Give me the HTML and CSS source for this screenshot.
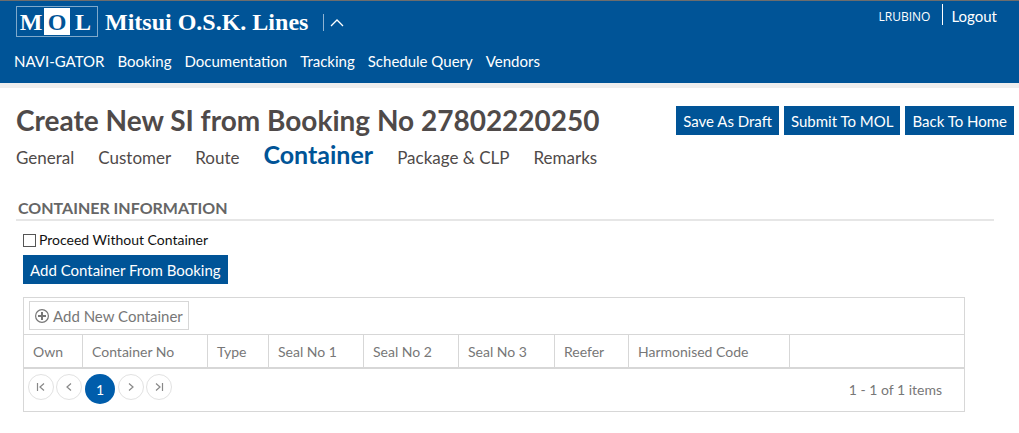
FILE: index.html
```html
<!DOCTYPE html>
<html lang="en">
<head>
<meta charset="utf-8">
<title>Create New SI</title>
<link rel="stylesheet" href="styles.css">
</head>
<body>
<header class="header">
  <div class="topbar">
    <a class="brand" href="#">
      <span class="brand-box"><span class="brand-cell">M</span><span class="brand-cell brand-cell-on">O</span><span class="brand-cell">L</span></span>
      <span class="brand-name">Mitsui O.S.K. Lines</span>
    </a>
    <button class="collapse" type="button" aria-label="Collapse header">
      <svg width="14" height="9" viewBox="0 0 14 9"><path d="M1 8 L7 2 L13 8" fill="none" stroke="currentColor" stroke-width="1.3"/></svg>
    </button>
    <div class="account">
      <span class="user">LRUBINO</span>
      <a class="logout" href="#">Logout</a>
    </div>
  </div>
  <nav class="menu">
    <a href="#">NAVI-GATOR</a>
    <a href="#">Booking</a>
    <a href="#">Documentation</a>
    <a href="#">Tracking</a>
    <a href="#">Schedule Query</a>
    <a href="#">Vendors</a>
  </nav>
</header>
<main class="page">
  <div class="heading">
    <h1 class="title">Create New SI from Booking No 27802220250</h1>
    <div class="actions">
      <button class="btn" type="button">Save As Draft</button>
      <button class="btn" type="button">Submit To MOL</button>
      <button class="btn" type="button">Back To Home</button>
    </div>
  </div>
  <nav class="tabs">
    <a href="#">General</a>
    <a href="#">Customer</a>
    <a href="#">Route</a>
    <a class="tab-current" href="#">Container</a>
    <a href="#">Package &amp; CLP</a>
    <a href="#">Remarks</a>
  </nav>
  <section class="section">
    <h2 class="section-title">CONTAINER INFORMATION</h2>
    <div class="section-body">
      <label class="check"><input type="checkbox">Proceed Without Container</label>
      <button class="btn btn-wide" type="button">Add Container From Booking</button>
      <div class="grid">
        <div class="toolbar">
          <button class="add" type="button">
            <svg width="14" height="14" viewBox="0 0 14 14" fill="none" stroke="currentColor"><circle cx="7" cy="7" r="6.4" stroke-width="1.2"/><path d="M7 3 V11 M3 7 H11" stroke-width="2"/></svg>
            Add New Container
          </button>
        </div>
        <table class="table">
          <colgroup><col class="c-own"><col class="c-no"><col class="c-type"><col class="c-seal"><col class="c-seal"><col class="c-seal-end"><col class="c-reefer"><col class="c-code"><col></colgroup>
          <thead>
            <tr><th>Own</th><th>Container No</th><th>Type</th><th>Seal No 1</th><th>Seal No 2</th><th>Seal No 3</th><th>Reefer</th><th>Harmonised Code</th><td></td></tr>
          </thead>
        </table>
        <div class="pager">
          <button class="page-btn" type="button" aria-label="First page"><svg width="10" height="10" viewBox="0 0 10 10"><path d="M1.5 1 V9 M8 1.5 L4 5 L8 8.5"/></svg></button>
          <button class="page-btn" type="button" aria-label="Previous page"><svg width="10" height="10" viewBox="0 0 10 10"><path d="M7 1.5 L3 5 L7 8.5"/></svg></button>
          <button class="page-btn page-current" type="button">1</button>
          <button class="page-btn" type="button" aria-label="Next page"><svg width="10" height="10" viewBox="0 0 10 10"><path d="M3 1.5 L7 5 L3 8.5"/></svg></button>
          <button class="page-btn" type="button" aria-label="Last page"><svg width="10" height="10" viewBox="0 0 10 10"><path d="M2 1.5 L6 5 L2 8.5 M8.5 1 V9"/></svg></button>
          <span class="count">1 - 1 of 1 items</span>
        </div>
      </div>
    </div>
  </section>
</main>
</body>
</html>
```
FILE: styles.css
```css
* { box-sizing: border-box; }
body {
  margin: 0;
  background: #fff;
  color: #4f4a49;
  font-family: Lato, "Open Sans", sans-serif;
  font-size: 15px;
}
a { color: inherit; text-decoration: none; }
button { font: inherit; cursor: pointer; }
h1, h2 { margin: 0; }

.header {
  background: #005497;
  color: #fff;
  border-top: 1px solid #6d6d6d;
  border-bottom: 5px solid #eee;
  padding-bottom: 12px;
}
.topbar {
  display: flex;
  align-items: flex-start;
  padding: 3px 22px 0 16px;
}
.brand {
  display: flex;
  align-items: center;
  gap: 7px;
  margin-top: 2px;
  font-family: "Liberation Serif", serif;
  font-weight: bold;
  font-size: 24px;
}
.brand-box {
  display: flex;
  height: 31px;
  border: 1px solid #7fa9cb;
  padding: 1px;
}
.brand-cell { width: 26px; text-align: center; line-height: 28px; }
.brand-cell-on { background: #fff; color: #005497; }
.brand-name { line-height: 30px; white-space: nowrap; }
.collapse {
  margin: 10px 0 0 15px;
  height: 17px;
  padding: 0 0 0 6px;
  border: 0;
  border-left: 1px solid #8fb3d2;
  background: none;
  color: #fff;
  display: flex;
  align-items: center;
}
.account { margin-left: auto; display: flex; line-height: 21px; }
.user {
  font-family: "Open Sans", sans-serif;
  font-size: 12px;
  line-height: 25px;
  height: 21px;
  padding-right: 12px;
  border-right: 1px solid #fff;
}
.logout { padding-left: 8px; line-height: 24px; }
.menu {
  display: flex;
  gap: 13px;
  padding: 14px 14px 0;
  line-height: 20px;
}

.page { padding: 18px 5px 0 16px; }
.heading { display: flex; justify-content: space-between; align-items: flex-start; }
.title { font-size: 28px; line-height: 28px; font-weight: bold; white-space: nowrap; }
.actions { display: flex; gap: 5px; }
.btn {
  height: 29px;
  border: 0;
  padding: 0 7px;
  background: #005497;
  color: #fff;
  white-space: nowrap;
}
.tabs {
  display: flex;
  align-items: baseline;
  gap: 24px;
  margin-top: 2px;
  font-size: 17px;
  line-height: 34px;
}
.tab-current { font-size: 25px; font-weight: bold; color: #005497; }

.section { margin: 22px 20px 0 0; }
.section-title {
  border-bottom: 2px solid #e6e6e6;
  padding-left: 2px;
  font-size: 16px;
  line-height: 22px;
  color: #666;
}
.section-body {
  padding: 11px 29px 0 7px;
  display: flex;
  flex-direction: column;
  align-items: flex-start;
}
.check {
  display: flex;
  align-items: center;
  gap: 3px;
  font-size: 14px;
  line-height: 16px;
  color: #111;
}
.check input {
  appearance: none;
  width: 13px;
  height: 13px;
  margin: 0;
  border: 1px solid #555;
  background: #fff;
}
.check input:checked { background: #005497; }
.btn-wide { margin-top: 7px; }

.grid { align-self: stretch; margin-top: 13px; border: 1px solid #d7d7d7; color: #777; }
.toolbar { padding: 3px 5px 4px; }
.add {
  display: flex;
  align-items: center;
  gap: 4px;
  height: 29px;
  padding: 0 5px;
  border: 1px solid #d7d7d7;
  background: #fff;
  color: #777;
}
.table {
  width: 100%;
  table-layout: fixed;
  border-collapse: separate;
  border-spacing: 0;
  border-top: 1px solid #d7d7d7;
  border-bottom: 2px solid #d7d7d7;
  font-size: 14px;
}
.table th {
  height: 32px;
  padding: 0 9px;
  border-right: 1px solid #d7d7d7;
  text-align: left;
  font-weight: normal;
  white-space: nowrap;
}
.c-own { width: 59px; }
.c-no { width: 125px; }
.c-type { width: 61px; }
.c-seal { width: 95px; }
.c-seal-end { width: 96px; }
.c-reefer { width: 74px; }
.c-code { width: 161px; }
.pager { display: flex; align-items: flex-start; gap: 2px; padding: 5px 22px 5px 4px; }
.page-btn {
  width: 26px;
  height: 26px;
  padding: 0;
  border: 1px solid #e2e2e2;
  border-radius: 50%;
  background: #fff;
  display: flex;
  align-items: center;
  justify-content: center;
}
.page-btn svg { fill: none; stroke: #888; stroke-width: 1.2; }
.page-current { width: 30px; height: 30px; margin: 0 1px; border: 0; background: #005dab; color: #fff; font-size: 14px; }
.count { margin-left: auto; line-height: 32px; font-size: 14px; }
```
